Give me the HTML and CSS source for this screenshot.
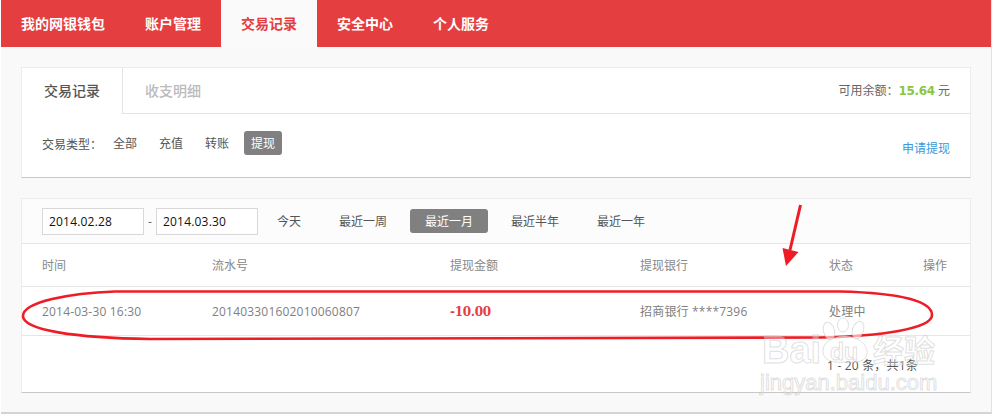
FILE: index.html
```html
<!DOCTYPE html>
<html lang="zh-CN">
<head>
<meta charset="utf-8">
<title>交易记录</title>
<link rel="stylesheet" href="styles.css">
</head>
<body>
<div class="frame">
  <nav class="nav">
    <a class="nav-item">我的网银钱包</a>
    <a class="nav-item">账户管理</a>
    <a class="nav-item active">交易记录</a>
    <a class="nav-item">安全中心</a>
    <a class="nav-item">个人服务</a>
  </nav>
  <main class="content">
    <section class="card card-top">
      <div class="tabs">
        <div class="tab current">交易记录</div>
        <div class="tab">收支明细</div>
        <div class="balance">可用余额：<b class="money">15.64</b> 元</div>
      </div>
      <div class="filter">
        <span class="filter-label">交易类型：</span>
        <a class="pill">全部</a>
        <a class="pill">充值</a>
        <a class="pill">转账</a>
        <a class="pill on">提现</a>
        <a class="apply">申请提现</a>
      </div>
    </section>
    <section class="card card-list">
      <div class="toolbar">
        <input class="date" type="text" value="2014.02.28">
        <span class="dash">-</span>
        <input class="date" type="text" value="2014.03.30">
        <div class="ranges">
          <a class="range">今天</a>
          <a class="range">最近一周</a>
          <a class="range on">最近一月</a>
          <a class="range">最近半年</a>
          <a class="range">最近一年</a>
        </div>
      </div>
      <div class="grid head">
        <span>时间</span><span>流水号</span><span>提现金额</span><span>提现银行</span><span>状态</span><span>操作</span>
      </div>
      <div class="grid row">
        <span>2014-03-30 16:30</span><span>201403301602010060807</span><span class="amount">-10.00</span><span>招商银行 ****7396</span><span>处理中</span><span></span>
      </div>
      <div class="pager">1 - 20 条，共1条</div>
    </section>
  </main>
</div>
<svg class="marks" width="992" height="415" viewBox="0 0 992 415" aria-hidden="true">
  <path d="M115 291.5 L840 291.5 C900 293 932 301 932 315 C932 329 880 336 820 337.5 L150 339 C75 338 23 330 23 316 C23 302 70 293 115 291.5 Z" fill="none" stroke="#ee1c25" stroke-width="2.6"/>
  <path d="M800.5 205 L790 250" fill="none" stroke="#ee1c25" stroke-width="3"/>
  <path d="M782.5 248 L798.5 252 L786 266 Z" fill="#ee1c25"/>
  <g fill="#fff" fill-opacity=".6" stroke="#bbb" stroke-opacity=".45">
    <ellipse cx="829" cy="331" rx="5.5" ry="9" transform="rotate(-15 829 331)"/>
    <ellipse cx="843" cy="325" rx="5.5" ry="7"/>
    <ellipse cx="858" cy="330" rx="5.5" ry="9" transform="rotate(18 858 330)"/>
    <path d="M823 352 C822 341 836 336 844 336 C853 336 868 341 867 354 C866 362 856 363 846 362 C836 363 824 362 823 352 Z"/>
  </g>
</svg>
<div class="wm wm-bai">Bai</div>
<div class="wm wm-du">du</div>
<div class="wm wm-jy">经验</div>
<div class="wm wm-url">jingyan.baidu.com</div>
</body>
</html>
```
FILE: styles.css
```css
* { box-sizing: border-box; }
html, body { margin: 0; height: 415px; overflow: hidden; background: #fff; }
body {
  position: relative;
  font-family: "Open Sans", "Noto Sans CJK SC", sans-serif;
  font-size: 12px;
  color: #666;
  letter-spacing: .19px;
}
.frame {
  margin-left: 1px;
  width: 991px;
  height: 414px;
  background: #f9f9f9;
  border-right: 1px solid #e2e2e2;
  border-bottom: 2px solid #d4d4d4;
}
.nav { display: flex; height: 47px; background: #e53e41; }
.nav-item {
  padding: 0 20px;
  line-height: 47px;
  font-size: 14px;
  font-weight: 700;
  color: #fff;
  letter-spacing: 0;
}
.nav-item.active { background: #fafafa; color: #e53e41; }
.content { padding: 20px 20px 0; display: flex; flex-direction: column; gap: 20px; }
.card {
  width: 950px;
  background: #fff;
  border: 1px solid #ececec;
  border-bottom-color: #c8c8c8;
}
.card-top { height: 111px; }
.card-list { height: 195px; }
.tabs { display: flex; align-items: stretch; height: 46px; }
.tab {
  width: 100px;
  line-height: 45px;
  text-align: center;
  font-size: 14px;
  font-weight: 500;
  color: #bbb;
  letter-spacing: 0;
  border-bottom: 1px solid #e4e4e4;
}
.tab.current {
  color: #555;
  border-right: 1px solid #e4e4e4;
  border-bottom: 0;
  width: 101px;
}
.balance {
  flex: 1;
  text-align: right;
  line-height: 45px;
  padding-right: 20px;
  border-bottom: 1px solid #e4e4e4;
  color: #666;
  letter-spacing: 0;
}
.money {
  font-family: "DejaVu Sans", sans-serif;
  font-size: 12px;
  color: #8cc63f;
  letter-spacing: -.3px;
}
.filter {
  display: flex;
  align-items: center;
  gap: 8px;
  height: 58px;
  padding: 0 20px;
  color: #555;
  letter-spacing: 0;
}
.filter-label { width: 56px; white-space: nowrap; padding-top: 1px; }
.pill { width: 38px; height: 24px; line-height: 26px; text-align: center; border-radius: 3px; }
.pill.on, .range.on { background: #808080; color: #fff; }
.apply { margin-left: auto; color: #3b99d9; position: relative; top: 5px; }
.toolbar {
  display: flex;
  align-items: center;
  height: 45px;
  padding: 0 20px;
  background: #fcfcfc;
  border-bottom: 1px solid #e6e6e6;
}
.date {
  width: 102px;
  height: 27px;
  padding: 0 6px;
  border: 1px solid #d8d8d8;
  background: #fff;
  font: inherit;
  letter-spacing: .19px;
  color: #111;
  border-radius: 0;
}
.dash { width: 12px; text-align: center; color: #666; }
.ranges { display: flex; gap: 8px; margin-left: 4px; color: #555; letter-spacing: 0; }
.range { padding: 0 15px; height: 24px; line-height: 26px; border-radius: 3px; }
.grid {
  display: grid;
  grid-template-columns: 170px 238px 190px 189px 94px 1fr;
  padding-left: 20px;
  align-items: center;
  border-bottom: 1px solid #e6e6e6;
  letter-spacing: 0;
}
.head { height: 43px; color: #888; }
.row { height: 49px; color: #808080; letter-spacing: .19px; }
.amount {
  font-family: "DejaVu Serif", serif;
  font-weight: 700;
  font-size: 12px;
  color: #e53e41;
  letter-spacing: -.3px;
  position: relative;
  top: 1px;
}
.pager { padding: 21px 52px 0 0; text-align: right; color: #555; line-height: 18px; }
.marks { position: absolute; left: 0; top: 0; pointer-events: none; }
.wm {
  position: absolute;
  font-family: "Liberation Sans", "Noto Sans CJK SC", sans-serif;
  color: rgba(255, 255, 255, .35);
  -webkit-text-stroke: 1px rgba(185, 185, 185, .45);
  letter-spacing: 0;
  white-space: nowrap;
  line-height: 1;
  pointer-events: none;
}
.wm-bai { left: 762px; top: 331px; font-size: 38px; font-weight: 700; }
.wm-du { left: 830px; top: 341px; font-size: 23px; font-weight: 700; }
.wm-jy { left: 873px; top: 333px; font-size: 31px; font-family: "Noto Sans CJK SC", sans-serif; font-weight: 700; }
.wm-url { left: 760px; top: 372px; font-size: 22px; }
```
